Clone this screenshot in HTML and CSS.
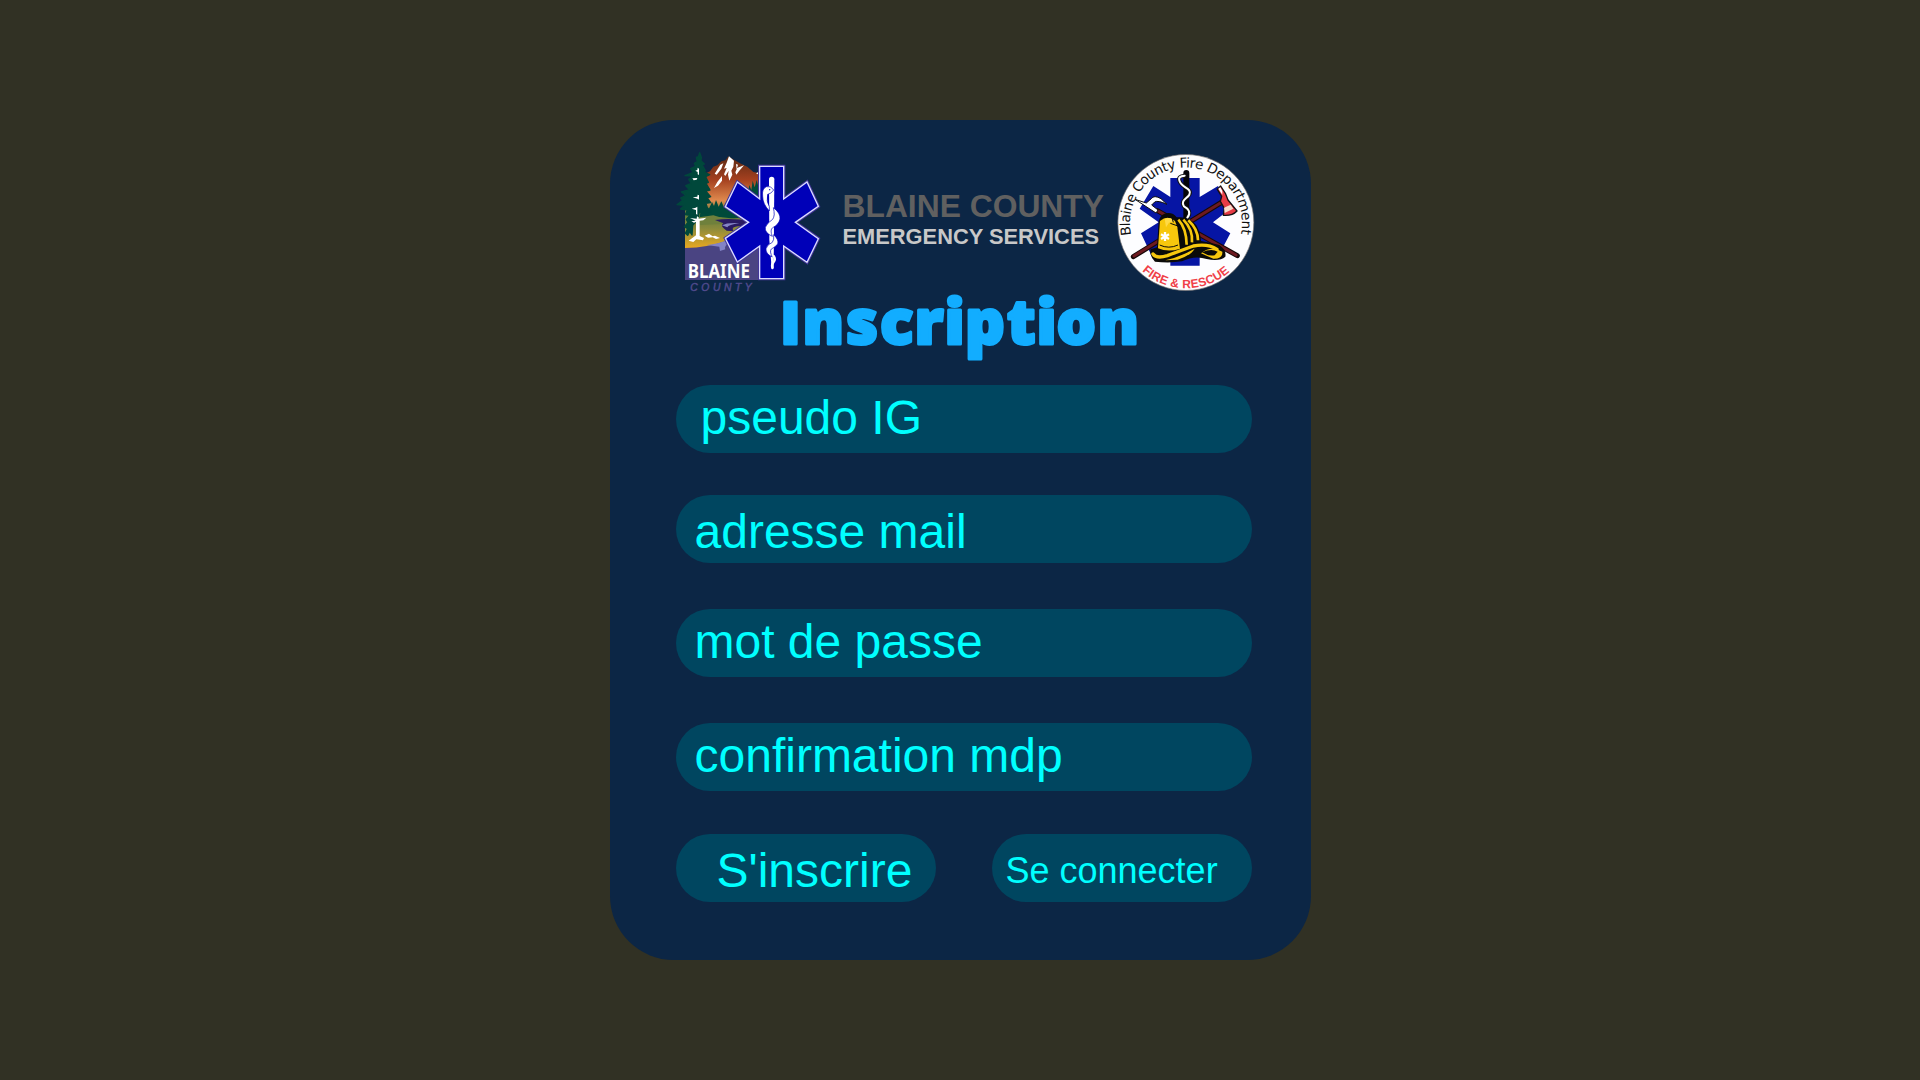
FILE: index.html
```html
<!DOCTYPE html>
<html lang="fr">
<head>
<meta charset="utf-8">
<title>Inscription</title>
<link rel="stylesheet" href="styles.css">
</head>
<body>
<main class="card">
  <header class="brand">
    <svg class="logo-county" viewBox="36 30 450 432" aria-hidden="true">
      <defs>
        <linearGradient id="sky" x1="0" y1="50" x2="0" y2="325" gradientUnits="userSpaceOnUse">
          <stop offset="0" stop-color="#5d2a14"/>
          <stop offset=".25" stop-color="#a4401f"/>
          <stop offset=".48" stop-color="#e08a4e"/>
          <stop offset=".62" stop-color="#5b7a3c"/>
          <stop offset=".78" stop-color="#8a8a3c"/>
          <stop offset="1" stop-color="#eaa820"/>
        </linearGradient>
      </defs>
      <path fill="url(#sky)" d="M75 326V200L128 112 138 100 150 94 160 80 172 76 184 64 196 61 205 49 222 59 240 70 262 80 280 96 300 100V326Z"/>
      <path fill="#fff" d="M207 49L222 62 220 80 214 92 217 104 208 122 204 104 206 92 196 108 192 103 200 84 192 86 200 68ZM181 74L190 70 184 86 170 104 164 101ZM228 72L234 74 231 84 252 76 238 92 229 104 226 97 230 88ZM186 108L186 122 174 137 162 144 172 126ZM288 100L297 95V104Z"/>
      <path fill="#004a3a" d="M118 235L124 205 132 212 140 200 146 208 156 186 162 198 168 180 176 200 184 184 192 202 202 190 220 205 262 170 268 135 274 150 278 122 284 142 290 120 298 150V238L225 236 180 231 150 242Z"/>
      <path fill="#6f803c" d="M118 232L160 226 200 238 250 232 240 250 120 255Z"/>
      <path fill="#2a1a62" d="M165 240Q215 232 270 244L262 258Q205 256 222 274L200 272Q178 258 190 250Z"/>
      <path fill="#8585c4" d="M186 256Q200 247 238 249 205 254 202 262Z"/>
      <path fill="#4a4482" d="M75 324Q145 322 200 302L300 290V420H75Z"/>
      <path fill="#8383c6" d="M140 315Q176 312 212 296L212 304Q190 320 196 328L180 333 178 320Z"/>
      <path fill="#00483b" stroke="#00483b" stroke-width="4" stroke-linejoin="round" d="M119 38L124 52 123 62 133 72 126 74 136 92 132 96 149 104 137 110 145 127 138 130 150 150 137 153 152 170 142 174 152 188 138 190 142 203 154 216 138 222 118 216 112 240 98 256 96 285 89 274 83 286 76 280 83 266 73 260 84 247 79 238 89 226 76 224 82 210 61 207 74 196 51 194 68 181 62 174 78 166 64 156 89 149 77 137 94 130 86 118 101 108 75 107 100 97 92 86 107 79 103 70 112 65 109 52 115 50Z"/>
      <path fill="#fff" d="M113 83L117 86V105L113 103V96L106 92 112 90ZM97 115L112 114 110 119 101 121ZM113 164L117 166V179L112 176 98 172 112 170ZM112 200V224L108 222V210L95 206 107 203ZM90 234L110 236 111 229 116 232V236L139 233 130 241 119 242V288L132 294 129 301 109 298 100 306 86 302 108 286V246L102 248 94 244 107 242ZM134 287L147 281 158 289 165 287 180 294 168 297 158 292 144 293Z"/>
      <path fill="#0000b4" stroke="#43369a" stroke-width="10" d="M299 79H371V177L441 126 475 199 406 247 475 296 441 367 371 318V416H299V318L232 366 196 295 266 247 196 200 232 126 299 177Z"/>
      <path fill="#0000b8" stroke="#dcdcff" stroke-width="4" d="M299 79H371V177L441 126 475 199 406 247 475 296 441 367 371 318V416H299V318L232 366 196 295 266 247 196 200 232 126 299 177Z"/>
      <path fill="#fff" d="M327 118Q327 110 335 110T343 118L341 384Q338 388 335 384L328 300Z"/>
      <path fill="#fff" stroke="#0000b8" stroke-width="2" d="M341 150Q333 136 319 140 305 146 308 169 308 192 328 213L328 200Q318 184 323 163 333 162 341 150Z"/>
      <path fill="#fff" stroke="#0000b8" stroke-width="2" d="M340 203Q362 219 360 237 356 254 338 263 329 270 337 289 313 278 316 262 322 248 338 238 346 227 340 203Z"/>
      <path fill="#fff" stroke="#0000b8" stroke-width="2" d="M341 284Q357 299 353 312 345 322 334 327 328 334 337 351 316 341 318 326 322 313 337 307 343 300 341 284Z"/>
      <path fill="none" stroke="#fff" stroke-width="7" stroke-linecap="round" d="M341 348Q348 358 341 366 334 372 337 384"/>
      <circle cx="329" cy="149" r="2" fill="#0000b8"/>
      <text class="county-name" x="83" y="415" textLength="187" lengthAdjust="spacingAndGlyphs">BLAINE</text>
      <text class="county-sub" x="91" y="452" textLength="184">COUNTY</text>
    </svg>

    <div class="brand-text">
      <p class="brand-title">BLAINE COUNTY</p>
      <p class="brand-subtitle">EMERGENCY SERVICES</p>
    </div>

    <svg class="logo-fire" viewBox="48 36 420 420" aria-hidden="true">
      <defs>
        <path id="arc-top" d="M93.600 285A168 168 0 1 1 422.400 285"/>
        <path id="arc-bottom" d="M126 393A196 196 0 0 0 391 393"/>
      </defs>
      <circle cx="257.500" cy="247.500" r="204" fill="#fdfdff" stroke="#77716f" stroke-width="2"/>
      <path fill="#0615a4" d="M211 114H299V171L354 138 391 206 339 247 391 280 354 350 299 318V377H211V318L156 350 123 280 176 247 119 206 160 138 211 171Z"/>
      <path fill="none" stroke="#160808" stroke-width="15" stroke-linecap="round" d="M172 212L412 347M100 350L376 180"/>
      <path fill="none" stroke="#6d1a20" stroke-width="9" stroke-linecap="round" d="M176 214L408 345M102 348L370 184"/>
      <path fill="#fff" stroke="#111" stroke-width="3" stroke-linejoin="round" d="M105 178L139 189 154 176Q162 164 183 176L201 193Q173 180 164 186L155 195 174 210 168 219Z"/>
      <path fill="#e63b45" stroke="#111" stroke-width="4" stroke-linejoin="round" d="M352 148L362 138 376 160 384 180 411 213Q397 228 370 226L373 205 361 184 365 169Z"/>
      <path fill="#fff" d="M355 146L361 142 367 153 367 164Z"/>
      <path fill="#f6dccb" d="M372 203L392 194 400 206 374 219Z"/>
      <path fill="none" stroke="#050509" stroke-width="18" stroke-linecap="round" d="M259 99V245"/>
      <path fill="none" stroke="#111" stroke-width="12" stroke-linecap="round" d="M254 107Q232 108 239 124C244 143 278 145 268 164 262 176 240 181 252 199 266 206 274 218 262 233"/>
      <path fill="none" stroke="#fff" stroke-width="6" stroke-linecap="round" d="M254 107Q232 108 239 124C244 143 278 145 268 164 262 176 240 181 252 199 266 206 274 218 262 233"/>
      <path fill="#0b0a08" d="M171 322L176 244Q183 219 205 219 221 219 230 232 268 228 289 256 302 280 303 303 330 307 358 315 380 330 376 350 359 365 320 357 284 345 246 364 209 370 165 365 147 346 152 328Z"/>
      <path fill="#f7c70d" d="M180 243Q203 224 225 243L232 262 240 326Q205 338 174 325L178 270Z"/>
      <path fill="#ffda46" d="M194 236Q214 229 222 244L207 248 198 262 196 249Z"/>
      <path fill="none" stroke="#fff" stroke-width="7" d="M195 276V303M183 283L207 297M207 283L183 297"/>
      <path fill="none" stroke="#f7c70d" stroke-width="8" d="M235 239Q259 265 260 314M250 239Q279 268 276 307M265 241Q294 268 294 301"/>
      <path fill="none" stroke="#f7c70d" stroke-width="10" stroke-linecap="round" d="M159 342Q169 357 202 347 239 333 280 318 324 310 351 328"/>
      <path fill="#f7c70d" d="M196 361Q235 353 284 326 273 346 233 359ZM303 340Q334 316 367 335 369 357 340 356Z"/>
      <path fill="#0b0a08" d="M306 337Q334 324 353 335L344 346Q324 349 306 337Z"/>
      <path fill="none" stroke="#0b0a08" stroke-width="3" d="M179 315Q206 328 234 315M211 250L231 257M216 234L220 247"/>
      <text class="fire-name"><textPath href="#arc-top" textLength="594">Blaine County Fire Department</textPath></text>
      <text class="fire-motto"><textPath href="#arc-bottom" textLength="288">FIRE &amp; RESCUE</textPath></text>
    </svg>
  </header>

  <h1 class="title">
    <svg class="title-art" viewBox="780 288 362 76">
      <text class="title-text" y="343.500" x="782 802.500 846 880 914.500 944.500 965 1007 1036.500 1056.500 1097.500"><tspan class="title-initial">I</tspan>nscription</text>
    </svg>
  </h1>

  <form class="form">
    <label class="field field-pseudo">pseudo IG</label>
    <label class="field field-mail">adresse mail</label>
    <label class="field field-password">mot de passe</label>
    <label class="field field-confirm">confirmation mdp</label>
    <div class="actions">
      <button class="action action-register" type="button">S'inscrire</button>
      <button class="action action-login" type="button">Se connecter</button>
    </div>
  </form>
</main>
</body>
</html>
```
FILE: styles.css
```css
* { box-sizing: border-box; margin: 0; }

body {
  min-height: 100vh;
  display: flex;
  align-items: center;
  justify-content: center;
  background: #313124;
  font-family: "Liberation Sans", Arial, sans-serif;
}

.card {
  width: 701px;
  height: 840px;
  padding: 30px 59px 0 66px;
  border-radius: 64px;
  background: #0c2645;
}

.brand {
  display: flex;
  align-items: flex-start;
  height: 144px;
  margin: 0 -4px;
}

.logo-county { width: 150px; height: 144px; flex: none; }
.logo-fire { width: 140px; height: 140px; flex: none; margin-top: 2px; }

.brand-text {
  width: 294px;
  padding: 38px 0 0 21px;
  flex: none;
  font-weight: bold;
  white-space: nowrap;
}

.brand-title { font-size: 31.800px; line-height: 36px; color: #606060; }
.brand-subtitle { font-size: 21.850px; line-height: 26px; color: #c8c8c8; }

.county-name { font: bold 61px "Noto Sans", sans-serif; fill: #fff; }
.county-sub { font: italic 31px "Liberation Sans", sans-serif; fill: #524b8e; stroke: #524b8e; stroke-width: 1.2px; }
.fire-name { font: 41px "DejaVu Sans", sans-serif; fill: #111; }
.fire-motto { font: bold 36px "Liberation Sans", sans-serif; fill: #f04048; }

.title { height: 76px; margin: -6px 0 21px 104px; }
.title-art { display: block; width: 362px; height: 76px; overflow: visible; }
.title-text {
  font: 900 62px "Noto Sans", sans-serif;
  fill: #12adff;
  stroke: #12adff;
  stroke-width: 3px;
  stroke-linejoin: round;
}
.title-initial { font-family: Inter, sans-serif; font-size: 58px; }

.form { display: flex; flex-direction: column; }

.field,
.action {
  height: 68px;
  border: 0;
  border-radius: 34px;
  background: #004660;
  color: #00ffff;
  font-family: inherit;
  font-size: 48px;
  line-height: 68px;
  text-align: left;
  white-space: nowrap;
}

.field { display: block; padding-left: 19px; }
.field-pseudo { padding-left: 25px; line-height: 66px; margin-bottom: 42px; }
.field-mail { line-height: 74px; margin-bottom: 46px; }
.field-password { line-height: 66px; margin-bottom: 46px; }
.field-confirm { line-height: 66px; margin-bottom: 43px; }

.actions { display: flex; justify-content: space-between; }
.action { width: 260px; padding: 0; }
.action-register { padding-left: 41px; line-height: 73px; }
.action-login { padding-left: 14px; font-size: 36px; line-height: 73px; }
```
